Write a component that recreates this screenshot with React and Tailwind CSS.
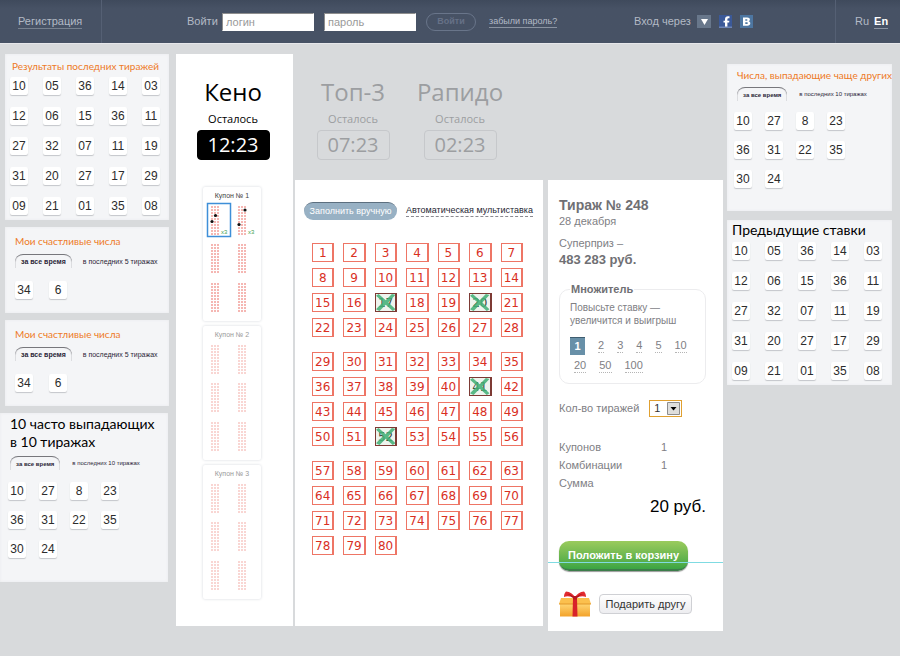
import React, { useState } from "react";

const DRAWS = [
  "10", "05", "36", "14", "03",
  "12", "06", "15", "36", "11",
  "27", "32", "07", "11", "19",
  "31", "20", "27", "17", "29",
  "09", "21", "01", "35", "08",
];
const FREQUENT = ["10", "27", "8", "23", "36", "31", "22", "35", "30", "24"];
const LUCKY = ["34", "6"];

function Tile({ value }) {
  return (
    <li className="flex h-[18px] w-[18px] items-center justify-center rounded-xs bg-white text-[12px] leading-none text-[#2c2c2c] shadow-[0_1px_1px_#c4c6ca]">
      {value}
    </li>
  );
}

function Tiles({ values, className }) {
  return (
    <ul className={"grid w-max " + className}>
      {values.map((v, i) => (
        <Tile key={i} value={v} />
      ))}
    </ul>
  );
}

function Period({ last, small, className }) {
  return (
    <div className={"flex h-[14px] items-center whitespace-nowrap leading-none text-[#2b2638] " + (small ? "gap-[12px] text-[6px] " : "gap-[11px] text-[7px] ") + className}>
      <button type="button" className="h-[14px] rounded-t-lg border-t border-t-[#77777c] px-[6px] text-center font-bold shadow-[inset_1px_0_0_#dcdde0,inset_-1px_0_0_#dcdde0]">
        за все время
      </button>
      <button type="button">{last}</button>
    </div>
  );
}

function Panel({ className, children }) {
  return <section className={"bg-[#f4f5f7] shadow-[inset_0_0_3px_#e9eaed] " + className}>{children}</section>;
}

function OrangeTitle({ className, children }) {
  return (
    <h2 className={"font-['Lato','Liberation_Sans',sans-serif] text-[10px] leading-[14px] whitespace-nowrap text-[#ee7a26] " + className}>
      {children}
    </h2>
  );
}

function BlackTitle({ className, children }) {
  return (
    <h2 className={"font-['Lato','Liberation_Sans',sans-serif] text-[14px] leading-[18px] whitespace-nowrap text-black " + className}>
      {children}
    </h2>
  );
}

function Header() {
  return (
    <header className="flex h-[44px] items-stretch border-b border-b-[#e6e7ea] bg-linear-to-b from-[#3f4a5c] via-[#475265] via-20% to-[#475265] text-[#b3bac6]">
      <div className="flex w-[102px] shrink-0 items-center border-r border-r-[#556074] pl-[18px]">
        <a href="#register" className="border-b border-b-[#77818f] text-[11px] leading-[13px]">Регистрация</a>
      </div>
      <form className="flex flex-1 items-center pl-[85px]" onSubmit={(e) => e.preventDefault()}>
        <label htmlFor="login" className="w-[35px] text-[11px]">Войти</label>
        <input id="login" placeholder="логин" className="h-[18px] w-[92px] border border-[#8e8e8e] border-r-white border-b-white bg-white px-[3px] text-[11px] text-[#555] placeholder:text-[#9a9a9a]" />
        <input aria-label="Пароль" type="password" placeholder="пароль" className="ml-[10px] h-[18px] w-[92px] border border-[#8e8e8e] border-r-white border-b-white bg-white px-[3px] text-[11px] text-[#555] placeholder:text-[#9a9a9a]" />
        <button type="submit" className="ml-[10px] h-[18px] w-[50px] rounded-full border border-[#69758a] text-[9px] leading-none font-bold text-[#667187]">Войти</button>
        <a href="#forgot" className="ml-[13px] border-b border-b-[#8a93a1] text-[9px] leading-[11px] whitespace-nowrap">забыли пароль?</a>
      </form>
      <div className="flex w-[202px] shrink-0 items-center border-r border-r-[#556074]">
        <span className="w-[63px] text-[11px] whitespace-nowrap">Вход через</span>
        <button type="button" aria-label="Другие сети" className="h-[13px] w-[14px] bg-[#68778b]">
          <svg viewBox="0 0 14 13" className="block h-[13px] w-[14px]"><path d="M4 4h7l-3.500 6z" fill="#fff" /></svg>
        </button>
        <button type="button" aria-label="Facebook" className="ml-[8px] h-[13px] w-[13px] bg-[#3b5998]">
          <svg viewBox="0 0 13 13" className="block h-[13px] w-[13px]">
            <path d="M6 12V7.600H4.500V5.700H6V4.300C6 2.500 7.100 1.300 8.900 1.300h1.600v2H9.400c-.7 0-1 .3-1 .9v1.500h2L10.100 7.600H8.400V12z" fill="#fff" />
            <path d="M0 11.500h13V13H0z" fill="#6d84b4" />
          </svg>
        </button>
        <button type="button" aria-label="ВКонтакте" className="ml-[8px] h-[13px] w-[13px] bg-[#4d76a1]">
          <svg viewBox="0 0 13 13" className="block h-[13px] w-[13px]">
            <path fillRule="evenodd" d="M3 2.500h4.200c1.800 0 2.700.8 2.700 2 0 .9-.5 1.500-1.300 1.800 1 .2 1.700.9 1.700 2 0 1.600-1.100 2.400-3 2.400H3zM5.300 4.200v1.500h1.300c.6 0 .9-.3.9-.8s-.3-.7-.9-.7zM5.300 7.200v1.800h1.600c.6 0 1-.3 1-.9s-.4-.9-1-.9z" fill="#fff" />
          </svg>
        </button>
      </div>
      <nav className="flex w-[64px] shrink-0 items-center gap-[5px] pl-[19px] text-[11px] leading-[13px]">
        <a href="#ru">Ru</a>
        <a href="#en" className="border-b border-b-[#8a93a1] font-bold text-white">En</a>
      </nav>
    </header>
  );
}

/* A ten-row block of tiny red number marks printed on a coupon. */
function TicketBlock({ x, y, opacity }) {
  const rows = [0, 3, 6, 9, 12, 15, 18, 21, 24, 27];
  return (
    <g fill="#e8564c" opacity={opacity}>
      {rows.map((dy) =>
        [0, 3, 6].map((dx) => <rect key={dx + "-" + dy} x={x + dx} y={y + dy} width="2" height="2" />)
      )}
    </g>
  );
}

function Coupon({ number, active }) {
  const o = active ? 0.42 : 0.24;
  return (
    <article className="h-[134px] w-[58px] rounded-xs bg-white shadow-[0_0_3px_#d3d6dc]">
      <h3 className={active ? "pt-[5px] text-center text-[7px] leading-[8px] text-[#444]" : "pt-[5px] text-center text-[7px] leading-[8px] text-[#9a9a9a]"}>
        Купон № {number}
      </h3>
      <svg viewBox="0 0 58 116" className="block h-[116px] w-[58px]" aria-hidden="true">
        {[6, 44, 83].map((y) => (
          <React.Fragment key={y}>
            <TicketBlock x={8} y={y} opacity={o} />
            <TicketBlock x={35} y={y} opacity={o} />
          </React.Fragment>
        ))}
        {active && (
          <g>
            <rect x="4.500" y="3.500" width="23" height="33" fill="none" stroke="#3e8fd8" strokeWidth="1.500" />
            <path d="M18 28h8v7h-8zM45 28h10v7H45z" fill="#fff" />
            <circle cx="12.500" cy="15.500" r="1.600" fill="#111" />
            <circle cx="9" cy="21.500" r="1.600" fill="#111" />
            <circle cx="42" cy="10" r="1.600" fill="#111" />
            <circle cx="36" cy="24.500" r="1.600" fill="#111" />
            <text x="18" y="34" fontSize="6" fill="#3f9f50">x3</text>
            <text x="45" y="34" fontSize="6" fill="#3f9f50">x3</text>
          </g>
        )}
      </svg>
    </article>
  );
}

function Lottery({ name, time, active }) {
  return (
    <div className={"flex w-[84px] flex-col items-center font-['Open_Sans','Noto_Sans',sans-serif] " + (active ? "text-black" : "text-[#9c9ea1]")}>
      <h2 className="text-[24px] leading-[32px] whitespace-nowrap">{name}</h2>
      <p className="mt-[3px] text-[11px] leading-[15px]">Осталось</p>
      <time
        className={
          "mt-[4px] flex h-[30px] w-[73px] items-center justify-center rounded-sm border text-[20px] leading-none " +
          (active ? "border-black bg-black text-white" : "border-[#c6c8cb]")
        }
      >
        {time}
      </time>
    </div>
  );
}

function Cell({ n, marked, onToggle }) {
  return (
    <button
      type="button"
      aria-pressed={marked}
      onClick={onToggle}
      className={
        "relative flex h-[19px] items-center justify-center border border-r-2 text-[12px] leading-none " +
        (marked ? "border-[#7d3a34] bg-[#eef4ee] text-[#3c4a3c]" : "border-[#ee7565] text-[#d9301f]")
      }
    >
      {n}
      {marked && (
        <svg viewBox="0 0 22 19" preserveAspectRatio="none" className="absolute inset-0 h-full w-full" aria-hidden="true">
          <path d="M0 2L3 0 11 7 18 0 22 1 14 9.500 22 17 19 19 11 12 4 19 0 17 8 9z" fill="#44b077" fillOpacity=".88" />
        </svg>
      )}
    </button>
  );
}

function NumberGrid() {
  const [picked, setPicked] = useState([17, 20, 41, 52]);
  const toggle = (n) => setPicked((p) => (p.includes(n) ? p.filter((v) => v !== n) : [...p, n]));
  const groups = [[1, 28], [29, 56], [57, 80]];
  return (
    <section className="min-w-0 flex-1 self-start bg-white pt-[22px] pr-[20px] pb-[71px] pl-[17px]">
      <div className="-ml-[8px] flex items-center gap-[9px] text-[9px] leading-[11px] whitespace-nowrap">
        <button type="button" className="h-[18px] w-[93px] shrink-0 rounded-full border-t border-t-[#5c6f7f] bg-[#98b1c4] text-white">Заполнить вручную</button>
        <a href="#auto" className="border-b border-dashed border-b-[#8a8a92] text-[#262633]">Автоматическая мультиставка</a>
      </div>
      <div className="mt-[23px] flex flex-col gap-[15px] font-['DejaVu_Sans',sans-serif]">
        {groups.map(([a, b]) => (
          <div key={a} className="grid grid-cols-7 gap-x-[9px] gap-y-[6px]">
            {Array.from({ length: b - a + 1 }, (_, i) => a + i).map((n) => (
              <Cell key={n} n={n} marked={picked.includes(n)} onToggle={() => toggle(n)} />
            ))}
          </div>
        ))}
      </div>
    </section>
  );
}

function Gift() {
  return (
    <svg viewBox="0 0 32 28" className="h-[28px] w-[32px]" aria-hidden="true">
      <defs>
        <linearGradient id="box" x1="0" y1="0" x2="0" y2="1">
          <stop offset="0" stopColor="#ffd978" />
          <stop offset="1" stopColor="#f3a22a" />
        </linearGradient>
      </defs>
      <path d="M1 13h30v13.500H1z" fill="url(#box)" />
      <path d="M2 8h28l2 6H0z" fill="#fbc04e" />
      <path d="M0 13.500h32v1H0z" fill="#e2982a" />
      <path d="M14 8h4l.5 18.500h-5z" fill="#d8232a" />
      <path d="M15.500 8.500C12 6 8 5.500 5 7c0-2 .5-4 2-5.500C11 1.500 14 4 16 7zM16.500 8.500C20 6 24 5.500 27 7c0-2-.5-4-2-5.500C21 1.500 18 4 16 7z" fill="#e12a2f" />
      <path d="M15 7.500C12.500 5 10.500 4 8 4c2 .5 4 1.500 5 3.500zM17 7.500c2.500-2.500 4.500-3.500 7-3.500-2 .5-4 1.500-5 3.500z" fill="#9d1219" />
      <path d="M14 6h4v3.500h-4z" fill="#b9161e" />
    </svg>
  );
}

function Order() {
  const [mult, setMult] = useState("1");
  const chip = (m) => (
    <button
      key={m}
      type="button"
      aria-pressed={m === mult}
      onClick={() => setMult(m)}
      className={
        m === mult
          ? "h-[18px] w-[15px] border-t border-t-[#3f5d70] bg-[#6890a8] text-[11px] leading-none font-bold text-white"
          : "border-b border-dotted border-b-[#b5b5b5] text-[11px] leading-[13px]"
      }
    >
      {m}
    </button>
  );
  return (
    <section className="relative w-[175px] shrink-0 self-start bg-white px-[11px] pt-[17px] pb-[13px] text-[11px] text-[#808084]">
      <h2 className="text-[14px] leading-[17px] font-bold text-[#707074]">Тираж № 248</h2>
      <p className="leading-[14px]">28 декабря</p>
      <p className="mt-[8px] leading-[14px]">Суперприз –</p>
      <p className="mt-px text-[13px] leading-[18px] font-bold text-[#707074]">483 283 руб.</p>
      <fieldset className="mt-[13px] mr-[6px] rounded-[10px] border border-[#ececee] px-[10px] pb-[10px]">
        <legend className="px-px leading-[14px] font-bold text-[#707074]">Множитель</legend>
        <p className="mt-[5px] text-[10px] leading-[13px] whitespace-nowrap">
          Повысьте ставку —<br />увеличится и выигрыш
        </p>
        <div className="mt-[10px] flex items-center gap-[13px]">{["1", "2", "3", "4", "5", "10"].map(chip)}</div>
        <div className="mt-[4px] flex items-center gap-[13px] pl-[4px]">{["20", "50", "100"].map(chip)}</div>
      </fieldset>
      <div className="mt-[16px] flex items-center gap-[10px]">
        <label htmlFor="draws" className="whitespace-nowrap">Кол-во тиражей</label>
        <span className="relative flex">
          <select id="draws" className="h-[17px] w-[33px] appearance-none border border-[#e0a030] bg-white pl-[4px] text-[11px] leading-none text-[#333]">
            <option>1</option>
            <option>2</option>
            <option>5</option>
          </select>
          <svg viewBox="0 0 13 13" className="pointer-events-none absolute top-[2px] right-[2px] h-[13px] w-[13px]" aria-hidden="true">
            <path d="M.5.5h12v12H.5z" fill="#dededc" stroke="#8d8d8d" />
            <path d="M3.500 5h6L6.500 8.500z" fill="#000" />
          </svg>
        </span>
      </div>
      <dl className="mt-[21px] grid grid-cols-[102px_1fr] leading-[18px]">
        <dt>Купонов</dt><dd>1</dd>
        <dt>Комбинации</dt><dd>1</dd>
        <dt>Сумма</dt>
      </dl>
      <p className="mt-[4px] mr-[6px] text-right text-[17px] leading-[22px] text-black">20 руб.</p>
      <button type="button" className="mt-[23px] block h-[30px] w-[129px] rounded-[10px] border-b-2 border-b-[#3c7d4a] bg-linear-to-b from-[#9acb5d] to-[#3aa544] text-[11px] leading-none font-bold whitespace-nowrap text-white shadow-[0_1px_1px_#999]">
        Положить в корзину
      </button>
      <div className="mt-[19px] flex items-center gap-[8px]">
        <Gift />
        <button type="button" className="h-[20px] w-[93px] rounded-sm border border-[#cfd0d4] bg-linear-to-b from-white to-[#ededf0] text-[11px] leading-none whitespace-nowrap text-[#333]">Подарить другу</button>
      </div>
      <div className="pointer-events-none absolute inset-x-0 bottom-[68px] h-px bg-[#7fdbe2]" />
    </section>
  );
}

export default function App() {
  return (
    <div className="min-h-screen bg-[#d8dadc] font-['Liberation_Sans',Arial,sans-serif]">
      <Header />
      <main className="flex items-start pt-[10px] pr-[8px]">
        <aside className="flex w-[169px] shrink-0 flex-col gap-[7px]">
          <Panel className="ml-[5px] pt-[5px] pb-[5px] pl-[5px]">
            <OrangeTitle className="pl-[2px]">Результаты последних тиражей</OrangeTitle>
            <Tiles values={DRAWS} className="mt-[4px] grid-cols-5 gap-x-[15px] gap-y-[12px]" />
          </Panel>
          {["a", "b"].map((k) => (
            <Panel key={k} className="ml-[5px] pt-[7px] pb-[14px] pl-[10px]">
              <OrangeTitle>Мои счастливые числа</OrangeTitle>
              <Period last="в последних 5 тиражах" className="mt-[6px]" />
              <Tiles values={LUCKY} className="mt-[13px] grid-cols-2 gap-x-[16px]" />
            </Panel>
          ))}
          <Panel className="mr-px pt-[2px] pb-[24px] pl-[8px]">
            <BlackTitle className="pl-[2px]">
              10 часто выпадающих<br />в 10 тиражах
            </BlackTitle>
            <Period small last="в последних 10 тиражах" className="mt-[5px] pl-[2px]" />
            <Tiles values={FREQUENT} className="mt-[12px] grid-cols-4 gap-x-[13px] gap-y-[11px]" />
          </Panel>
        </aside>

        <div className="ml-[7px] w-[117px] shrink-0 bg-white px-[15px] pt-[22px] pb-[27px]">
          <Lottery name="Кено" time="12:23" active />
          <div className="mt-[27px] flex flex-col gap-[5px] pl-[12px]">
            <Coupon number={1} active />
            <Coupon number={2} />
            <Coupon number={3} />
          </div>
        </div>

        <div className="ml-[2px] min-w-0 flex-1">
          <div className="flex gap-[23px] pt-[22px] pb-[20px] pl-[16px]">
            <Lottery name="Топ-3" time="07:23" />
            <Lottery name="Рапидо" time="02:23" />
          </div>
          <div className="flex gap-[5px]">
            <NumberGrid />
            <Order />
          </div>
        </div>

        <aside className="mt-[10px] ml-[4px] flex w-[165px] shrink-0 flex-col gap-[9px]">
          <Panel className="pt-[4px] pb-[23px] pl-[7px]">
            <OrangeTitle className="pl-[3px]">Числа, выпадающие чаще других</OrangeTitle>
            <Period small last="в последних 10 тиражах" className="mt-[5px] pl-[3px]" />
            <Tiles values={FREQUENT} className="mt-[11px] grid-cols-4 gap-x-[13px] gap-y-[11px]" />
          </Panel>
          <Panel className="pb-[5px] pl-[5px]">
            <BlackTitle className="pt-px">Предыдущие ставки</BlackTitle>
            <Tiles values={DRAWS} className="mt-[3px] grid-cols-5 gap-x-[15px] gap-y-[12px]" />
          </Panel>
        </aside>
      </main>
    </div>
  );
}
